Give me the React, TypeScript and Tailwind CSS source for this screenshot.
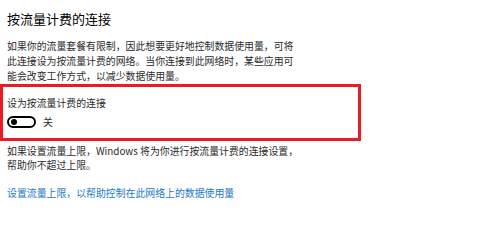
const font = { fontFamily: '"Noto Sans CJK SC", "Noto Sans", sans-serif' }

const Toggle = () => (
  <div className="flex h-[12px] w-[29px] items-center rounded-full border-2 border-black px-[2px]">
    <div className="h-[6px] w-[6px] rounded-full bg-black" />
  </div>
)

export default function App() {
  return (
    <div
      className="h-[218px] w-[491px] overflow-hidden bg-white text-[#2b2b2b]"
      style={font}
    >
      <div className="pl-[7px] pt-[9px] text-[13px] leading-[20px] text-black">
        按流量计费的连接
      </div>
      <p className="mt-[10px] whitespace-nowrap pl-[7px] text-[9.9px] leading-[15px]">
        如果你的流量套餐有限制，因此想要更好地控制数据使用量，可将
        <br />
        此连接设为按流量计费的网络。当你连接到此网络时，某些应用可
        <br />
        能会改变工作方式，以减少数据使用量。
      </p>
      <div className="w-[361px] border-[3px] border-[#e81c24] pb-[10px] pl-[4px] pt-[9px]">
        <div className="text-[9.9px] leading-[15px]">设为按流量计费的连接</div>
        <div className="mt-[5px] flex items-center gap-[7px]">
          <Toggle />
          <span className="text-[9.9px] leading-[11px]">关</span>
        </div>
      </div>
      <p className="mt-[3px] whitespace-nowrap pl-[7px] text-[9.9px] leading-[14px]">
        如果设置流量上限，Windows 将为你进行按流量计费的连接设置，
        <br />
        帮助你不超过上限。
      </p>
      <a className="mt-[14px] block pl-[7px] text-[9.9px] leading-[14px] text-[#1979ca]">
        设置流量上限，以帮助控制在此网络上的数据使用量
      </a>
    </div>
  )
}
